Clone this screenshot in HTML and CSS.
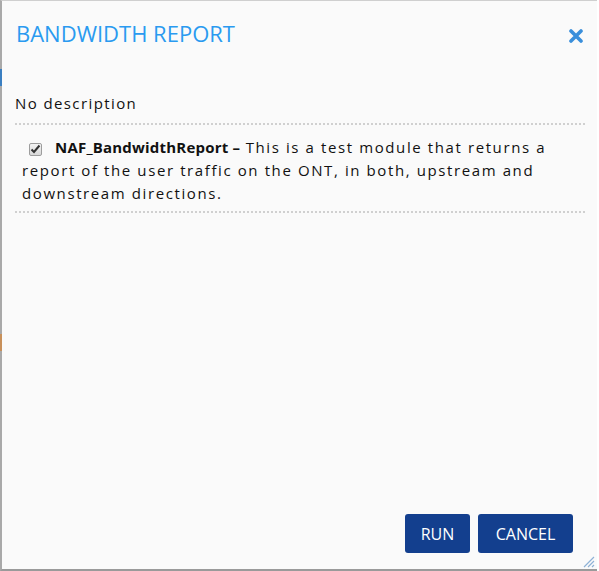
FILE: index.html
```html
<!DOCTYPE html>
<html>
<head>
<meta charset="utf-8">
<link rel="stylesheet" href="styles.css">
</head>
<body>
<div class="dialog">
  <span class="edge-accent accent-blue"></span>
  <span class="edge-accent accent-orange"></span>
  <div class="header">
    <h1 class="title">BANDWIDTH REPORT</h1>
    <span class="close" aria-label="close">
      <svg width="14" height="14" viewBox="0 0 14 14"><path d="M2 2 L12 12 M12 2 L2 12" stroke="#3a8fdb" stroke-width="3.6" stroke-linecap="round"/></svg>
    </span>
  </div>
  <div class="content">
    <p class="desc">No description</p>
    <div class="module">
      <span class="check"><svg width="11" height="10" viewBox="0 0 11 10"><path d="M1.5 5.5 L4 8 L9.5 1.5" fill="none" stroke="#333" stroke-width="2"/></svg></span><b>NAF_BandwidthReport –</b> This is a test module that returns a report of the user traffic on the ONT, in both, upstream and downstream directions.
    </div>
  </div>
  <div class="footer">
    <button class="btn btn-run">RUN</button>
    <button class="btn btn-cancel">CANCEL</button>
  </div>
  <span class="grip">
    <svg width="14" height="14" viewBox="0 0 14 14"><path d="M13 3 L3 13 M13 7 L7 13 M13 11 L11 13" stroke="#8fb2d6" stroke-width="1.2"/></svg>
  </span>
</div>
</body>
</html>
```
FILE: styles.css
```css
html, body { margin: 0; padding: 0; background: #ffffff; }
.dialog {
  position: relative;
  box-sizing: border-box;
  width: 597px;
  height: 571px;
  background: #fafafa;
  border-left: 2px solid #a9a9a9;
  border-top: 1px solid #cfcfcf;
  border-bottom: 2px solid #9a9a9a;
  display: flex;
  flex-direction: column;
  font-family: "Open Sans", "DejaVu Sans", sans-serif;
  color: #111;
}
.edge-accent { position: absolute; left: -2px; width: 2px; }
.accent-blue { top: 68px; height: 17px; background: #3a7fc1; }
.accent-orange { top: 333px; height: 17px; background: #c8905a; }
.header {
  display: flex;
  justify-content: space-between;
  align-items: center;
  padding: 18px 14px 0 14px;
  height: 28px;
}
.title {
  margin: 0;
  font-weight: normal;
  font-size: 22px;
  color: #2a9af0;
  letter-spacing: 0;
}
.close { display: flex; margin-top: 6px; }
.content { padding: 46px 12px 0 13px; flex: 1; }
.desc {
  margin: 0;
  font-size: 15px;
  line-height: 20px;
  letter-spacing: 1.4px;
  padding-bottom: 10px;
  border-bottom: 2px dotted #d0d0d0;
}
.module {
  font-size: 15px;
  line-height: 23px;
  letter-spacing: 1.6px;
  padding: 11px 4px 6px 7px;
  border-bottom: 2px dotted #d0d0d0;
}
.module b { letter-spacing: 0.2px; }
.check {
  display: inline-flex;
  align-items: center;
  justify-content: center;
  box-sizing: border-box;
  width: 13px; height: 13px;
  border: 1px solid #9d9d9d;
  border-radius: 2px;
  background: linear-gradient(#f4f4f4, #d8d8d8);
  margin: 0 13px 0 7px;
  vertical-align: -1px;
}
.footer {
  display: flex;
  justify-content: flex-end;
  gap: 8px;
  padding: 0 24px 16px 0;
}
.btn {
  height: 39px;
  border: none;
  border-radius: 3px;
  background: #133f8e;
  color: #fff;
  font-family: "Open Sans", "DejaVu Sans", sans-serif;
  font-size: 16px;
  padding: 0;
}
.btn-run { width: 65px; }
.btn-cancel { width: 95px; }
.grip { position: absolute; right: 2px; bottom: 1px; display: flex; }
```
